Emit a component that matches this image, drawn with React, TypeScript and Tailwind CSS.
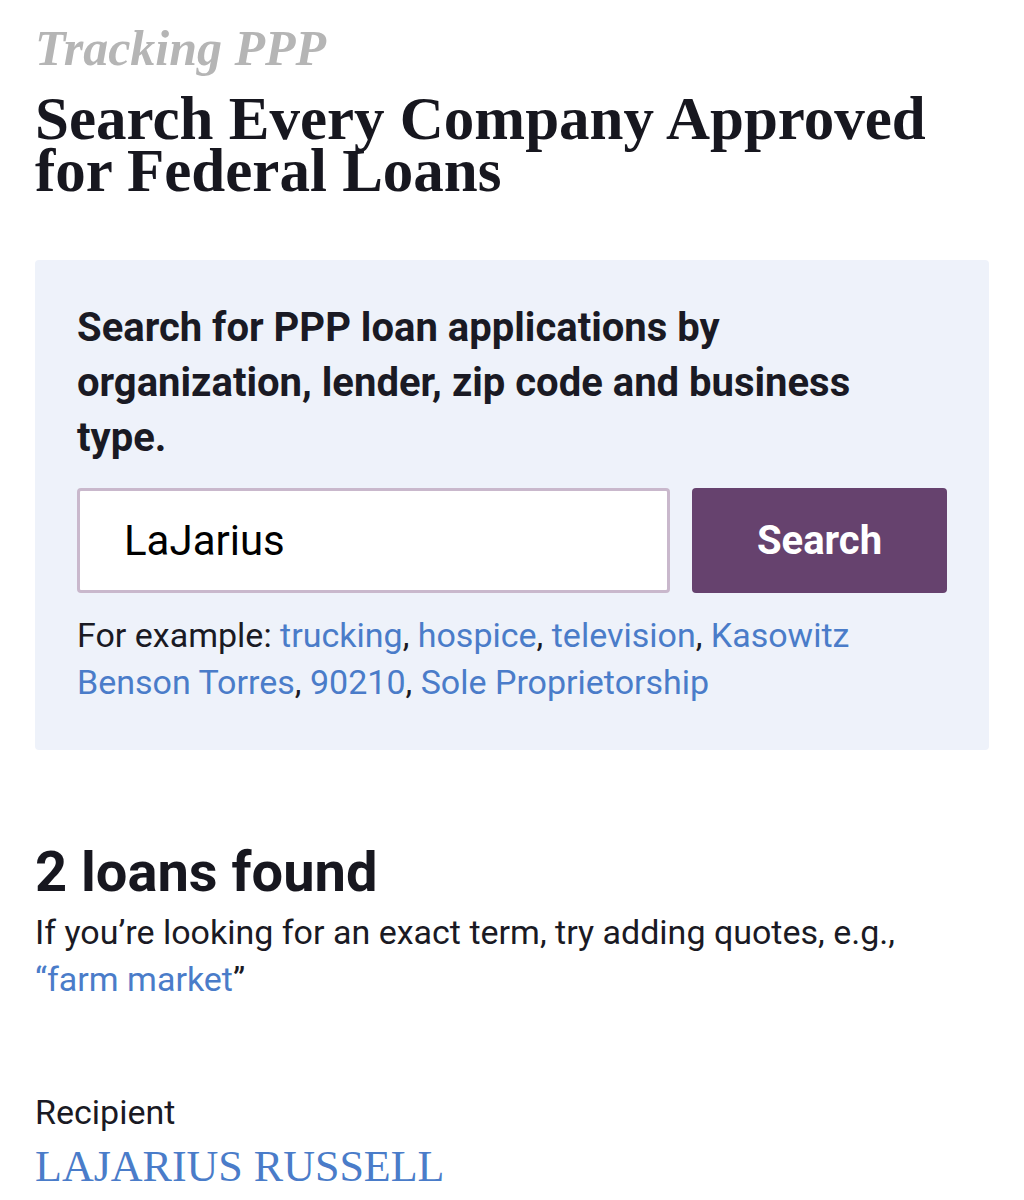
import React from "react";

const sans = "font-['Roboto','Liberation_Sans',sans-serif]";
const serif = "font-['Liberation_Serif','Times_New_Roman',serif]";

function L({ children }: { children: React.ReactNode }) {
  return <a className="text-[#4a7cc9]">{children}</a>;
}

export default function App() {
  return (
    <div className="w-[1024px] min-h-[1200px] bg-white px-[35px] pt-[24px] overflow-hidden">
      <div className={`${serif} italic font-bold text-[50px] leading-[48px] text-[#b5b5b5]`}>
        Tracking PPP
      </div>
      <h1 className={`${serif} font-bold text-[61px] leading-[52px] text-[#17171f] mt-[21px]`}>
        Search Every Company Approved
        <br />
        for Federal Loans
      </h1>

      <div className="mt-[63px] bg-[#eef2fa] rounded-[4px] px-[42px] pt-[40px] pb-[44px]">
        <p className={`${sans} font-bold text-[40px] leading-[55px] text-[#1a1a24] pr-[40px]`}>
          Search for PPP loan applications by organization, lender, zip code and business type.
        </p>
        <div className="mt-[23px] flex gap-[22px]">
          <div className="flex-1 h-[105px] bg-white border-[3px] border-[#c9b8cc] rounded-[4px] flex items-center pl-[44px]">
            <span className={`${sans} text-[42px] text-black`}>LaJarius</span>
          </div>
          <button className="w-[255px] h-[105px] bg-[#66426e] rounded-[4px] flex items-center justify-center">
            <span className={`${sans} font-bold text-[40px] text-white`}>Search</span>
          </button>
        </div>
        <p className={`${sans} text-[34px] leading-[47px] text-[#1a1a24] mt-[19px]`}>
          For example: <L>trucking</L>, <L>hospice</L>, <L>television</L>, <L>Kasowitz Benson Torres</L>,{" "}
          <L>90210</L>, <L>Sole Proprietorship</L>
        </p>
      </div>

      <h2 className={`${sans} font-bold text-[56px] leading-[60px] text-[#17171f] mt-[92px]`}>
        2 loans found
      </h2>
      <p className={`${sans} text-[34px] leading-[47px] text-[#1a1a24] mt-[7px] pr-[60px]`}>
        If you’re looking for an exact term, try adding quotes, e.g., <L>“farm market</L>”
      </p>

      <div className={`${sans} text-[34px] leading-[47px] text-[#1a1a24] mt-[86px]`}>Recipient</div>
      <div className={`${serif} text-[44px] leading-[50px] text-[#4a7cc9] mt-[6px]`}>LAJARIUS RUSSELL</div>
    </div>
  );
}
